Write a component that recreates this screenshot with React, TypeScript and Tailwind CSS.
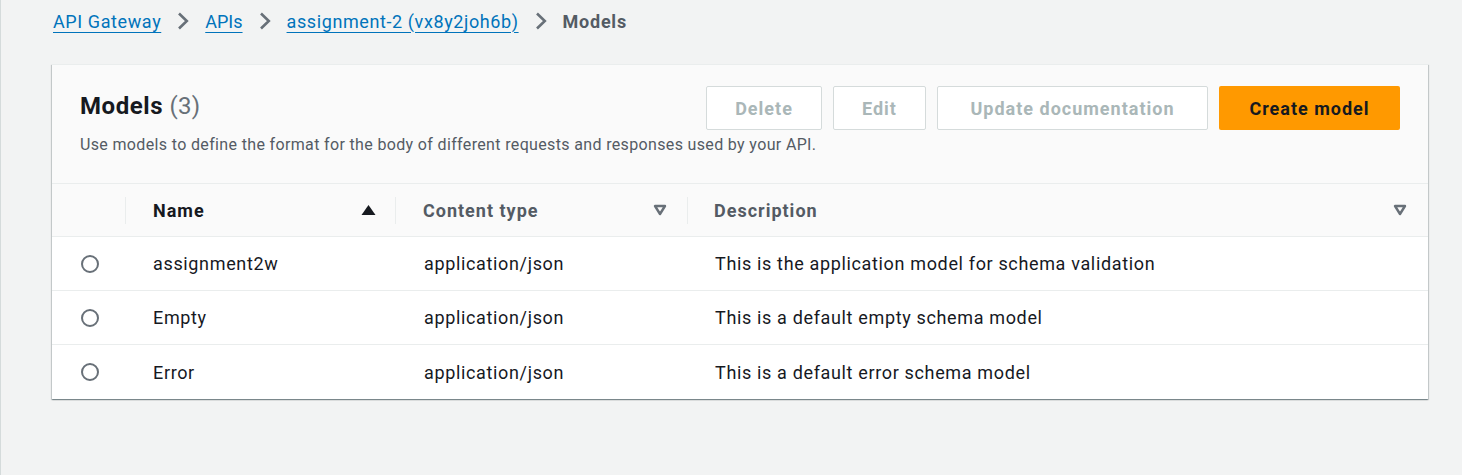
import React from "react";

const font = { fontFamily: "Roboto, 'Liberation Sans', sans-serif" };

function Chevron() {
  return (
    <svg width="12" height="18" viewBox="0 0 12 18" className="ml-[16px] mr-[16px]">
      <path d="M2 1.5 L9.8 9 L2 16.5" fill="none" stroke="#687078" strokeWidth="2.6" />
    </svg>
  );
}

function SortDown() {
  return (
    <svg width="14" height="12" viewBox="0 0 14 12">
      <path d="M2 2 H12 L7 10 Z" fill="none" stroke="#687078" strokeWidth="2.4" strokeLinejoin="round" />
    </svg>
  );
}

function SortUp() {
  return (
    <svg width="15" height="12" viewBox="0 0 15 12">
      <path d="M7.5 1 L14.5 11 H0.5 Z" fill="#16191f" />
    </svg>
  );
}

function Radio() {
  return <div className="w-[18px] h-[18px] rounded-full border-2 border-[#687078] bg-white" />;
}

const rows = [
  ["assignment2w", "application/json", "This is the application model for schema validation"],
  ["Empty", "application/json", "This is a default empty schema model"],
  ["Error", "application/json", "This is a default error schema model"],
];

const buttons: [string, string][] = [
  ["Delete", "w-[116px]"],
  ["Edit", "w-[93px]"],
  ["Update documentation", "w-[271px]"],
];

export default function App() {
  return (
    <div className="w-[1462px] h-[475px] bg-[#f2f3f3] border-l border-[#d5dbdb] overflow-hidden" style={font}>
      <div className="h-[42px] pl-[52px] flex items-center text-[18px] tracking-[0.6px]">
        <a className="text-[#0073bb] underline underline-offset-[4px]">API Gateway</a>
        <Chevron />
        <a className="text-[#0073bb] underline underline-offset-[4px] tracking-[0px]">APIs</a>
        <Chevron />
        <a className="text-[#0073bb] underline underline-offset-[4px]">assignment-2 (vx8y2joh6b)</a>
        <Chevron />
        <span className="text-[#545b64] font-bold tracking-[0.75px]">Models</span>
      </div>
      <div className="ml-[51px] mt-[22px] w-[1376px] bg-white border-t border-[#eaeded] shadow-[0_1px_1px_0_rgba(0,28,36,0.3),1px_1px_1px_0_rgba(0,28,36,0.15),-1px_1px_1px_0_rgba(0,28,36,0.15)]">
        <div className="bg-[#fafafa] border-b border-[#eaeded] pl-[28px] pr-[28px] pt-[21px] pb-[27px]">
          <div className="flex items-start justify-between">
            <h2 className="text-[24px] leading-[32px] font-bold text-[#16191f] mt-[4px] tracking-[0.55px]">
              Models <span className="font-normal text-[#687078] tracking-[0.3px]">(3)</span>
            </h2>
            <div className="flex gap-[11px]">
              {buttons.map(([b, w]) => (
                <button
                  key={b}
                  className={`${w} h-[44px] border border-[#d5dbdb] rounded-[2px] bg-white text-[#aab7b8] font-bold text-[18px] tracking-[1px] text-center`}
                >
                  {b}
                </button>
              ))}
              <button className="w-[181px] h-[44px] rounded-[2px] bg-[#ff9900] text-[#16191f] font-bold text-[18px] tracking-[1px] text-center">
                Create model
              </button>
            </div>
          </div>
          <p className="text-[16px] leading-[22px] text-[#545b64] mt-[4px] tracking-[0.35px]">
            Use models to define the format for the body of different requests and responses used by your API.
          </p>
        </div>
        <div className="flex h-[53px] bg-[#fafafa] border-b border-[#eaeded] items-center text-[18px] font-bold tracking-[1px]">
          <div className="w-[74px] h-[27px] border-r border-[#eaeded]" />
          <div className="w-[270px] h-[27px] flex items-center justify-between pl-[27px] pr-[19px] border-r border-[#eaeded] text-[#16191f]">
            Name <SortUp />
          </div>
          <div className="w-[292px] h-[27px] flex items-center justify-between pl-[27px] pr-[20px] border-r border-[#eaeded] text-[#545b64]">
            Content type <SortDown />
          </div>
          <div className="flex-1 h-[27px] flex items-center justify-between pl-[26px] pr-[21px] text-[#545b64]">
            Description <SortDown />
          </div>
        </div>
        {rows.map((r, i) => (
          <div
            key={r[0]}
            className={`flex h-[54px] items-center text-[18px] text-[#16191f] tracking-[0.65px] ${i < rows.length - 1 ? "border-b border-[#eaeded]" : ""}`}
          >
            <div className="w-[74px] pl-[29px]">
              <Radio />
            </div>
            <div className="w-[271px] pl-[27px]">{r[0]}</div>
            <div className="w-[292px] pl-[27px]">{r[1]}</div>
            <div className="flex-1 pl-[26px]">{r[2]}</div>
          </div>
        ))}
      </div>
    </div>
  );
}
